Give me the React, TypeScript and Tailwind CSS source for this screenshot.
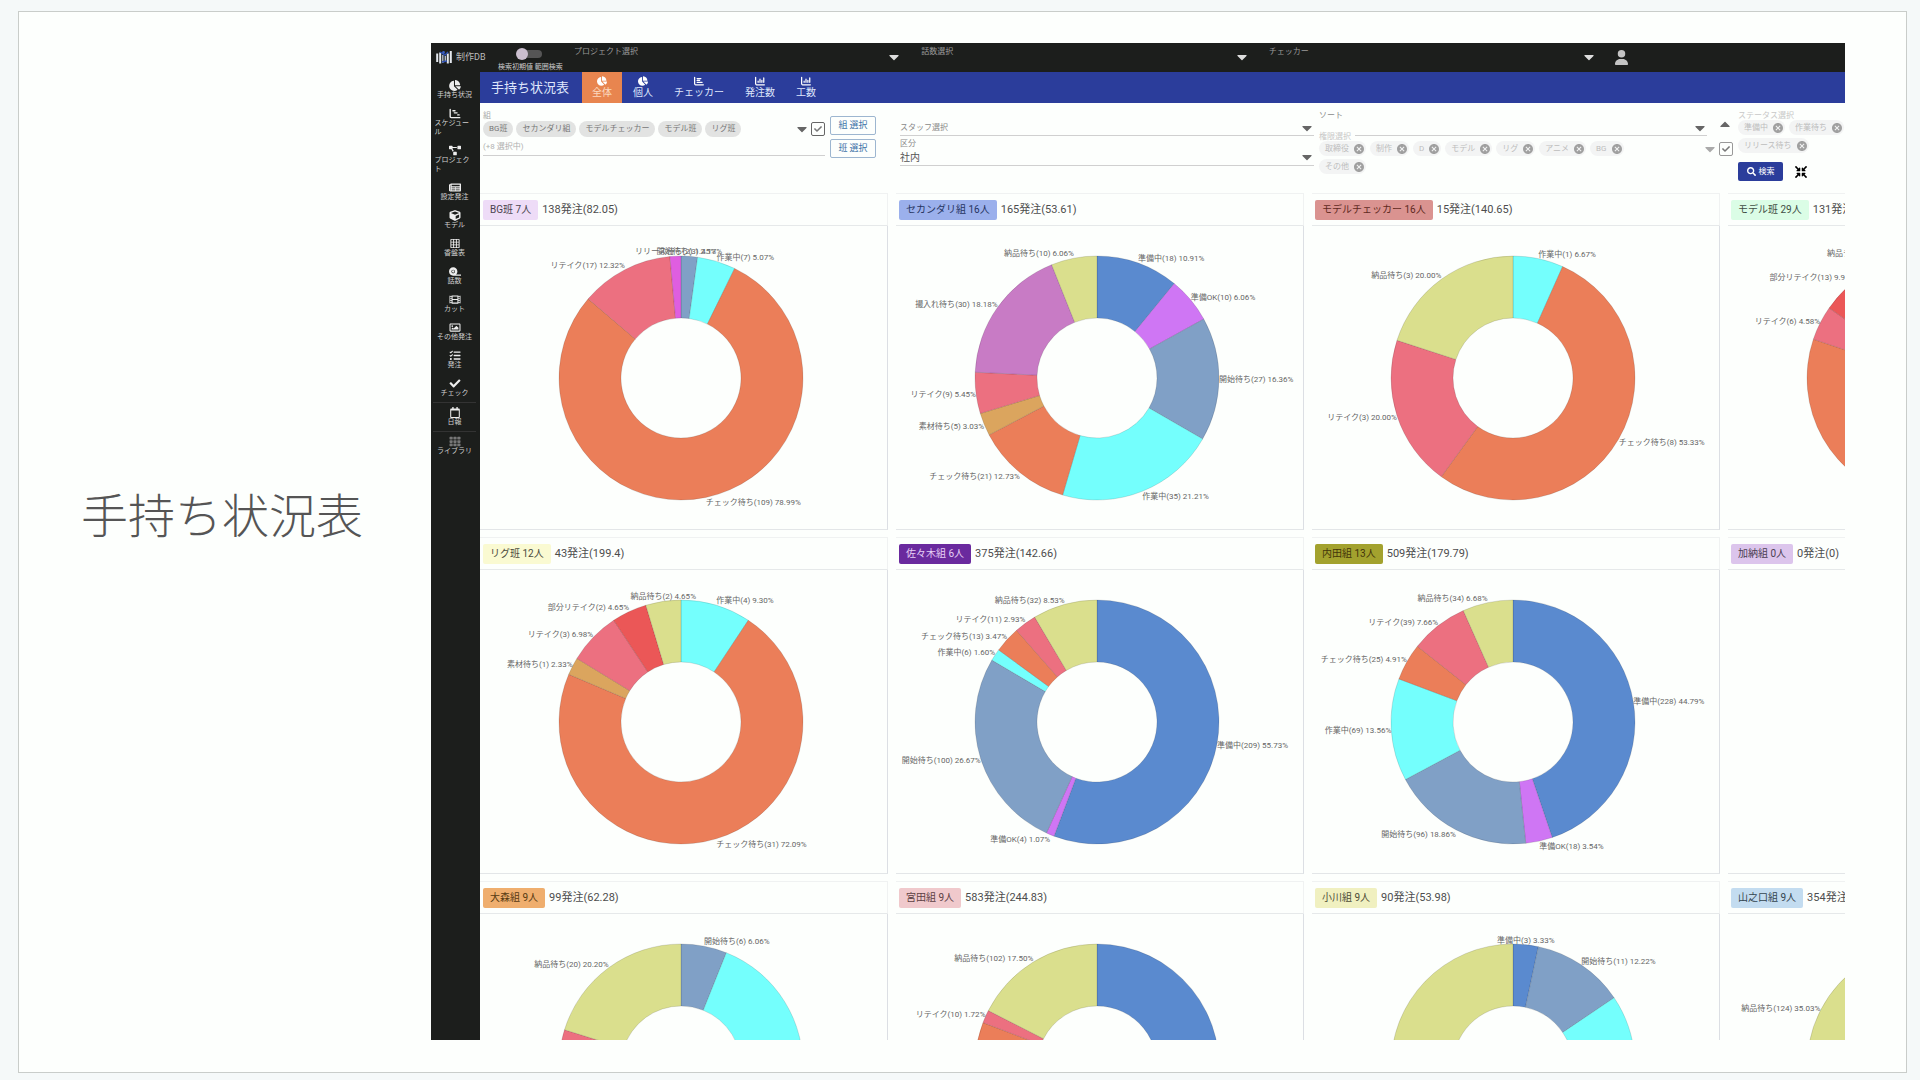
import React from "react";
import {
  FaCaretDown,
  FaCaretUp,
  FaChartPie,
  FaCheck,
  FaCompressArrowsAlt,
  FaCube,
  FaFilm,
  FaNewspaper,
  FaProjectDiagram,
  FaRegCalendar,
  FaRegImage,
  FaSearch,
  FaTape,
  FaTasks,
  FaTh,
} from "react-icons/fa";
import { FaChartBar, FaChartColumn, FaChartGantt, FaUser } from "react-icons/fa6";
import { MdCancel, MdGridOn } from "react-icons/md";

type Slice = [status: string, count: number];

type Team = {
  name: string;
  badge: string;
  orders: string;
  slices: Slice[];
};

const STATUS_COLORS: Record<string, string> = {
  準備中: "#5a8acf",
  準備OK: "#cf76f4",
  開始待ち: "#80a0c6",
  作業中: "#74fffd",
  チェック待ち: "#eb7e59",
  素材待ち: "#dba55e",
  リテイク: "#ec7080",
  部分リテイク: "#eb5757",
  撮入れ待ち: "#c87bc5",
  リリース待ち: "#df5ee0",
  納品チェック: "#dadf8d",
  納品待ち: "#dadf8d",
};

const TEAMS: Team[] = [
  {
    name: "BG班 7人",
    badge: "bg-[#eedcf7] text-[#4a444e]",
    orders: "138発注(82.05)",
    slices: [["開始待ち", 3], ["作業中", 7], ["チェック待ち", 109], ["リテイク", 17], ["リリース待ち", 2]],
  },
  {
    name: "セカンダリ組 16人",
    badge: "bg-[#9bb0ec] text-[#26345f]",
    orders: "165発注(53.61)",
    slices: [
      ["準備中", 18],
      ["準備OK", 10],
      ["開始待ち", 27],
      ["作業中", 35],
      ["チェック待ち", 21],
      ["素材待ち", 5],
      ["リテイク", 9],
      ["撮入れ待ち", 30],
      ["納品待ち", 10],
    ],
  },
  {
    name: "モデルチェッカー 16人",
    badge: "bg-[#da9390] text-[#5f2a22]",
    orders: "15発注(140.65)",
    slices: [["作業中", 1], ["チェック待ち", 8], ["リテイク", 3], ["納品待ち", 3]],
  },
  {
    name: "モデル班 29人",
    badge: "bg-[#dbfde6] text-[#414d44]",
    orders: "131発注(120.5)",
    slices: [["チェック待ち", 105], ["リテイク", 6], ["部分リテイク", 13], ["納品チェック", 7]],
  },
  {
    name: "リグ班 12人",
    badge: "bg-[#fafad2] text-[#4b4a3c]",
    orders: "43発注(199.4)",
    slices: [
      ["作業中", 4],
      ["チェック待ち", 31],
      ["素材待ち", 1],
      ["リテイク", 3],
      ["部分リテイク", 2],
      ["納品待ち", 2],
    ],
  },
  {
    name: "佐々木組 6人",
    badge: "bg-[#6a2a9e] text-[#e6cff5]",
    orders: "375発注(142.66)",
    slices: [
      ["準備中", 209],
      ["準備OK", 4],
      ["開始待ち", 100],
      ["作業中", 6],
      ["チェック待ち", 13],
      ["リテイク", 11],
      ["納品待ち", 32],
    ],
  },
  {
    name: "内田組 13人",
    badge: "bg-[#a3a22e] text-[#43350a]",
    orders: "509発注(179.79)",
    slices: [
      ["準備中", 228],
      ["準備OK", 18],
      ["開始待ち", 96],
      ["作業中", 69],
      ["チェック待ち", 25],
      ["リテイク", 39],
      ["納品待ち", 34],
    ],
  },
  { name: "加納組 0人", badge: "bg-[#dcc5ec] text-[#4a3d52]", orders: "0発注(0)", slices: [] },
  {
    name: "大森組 9人",
    badge: "bg-[#efae6e] text-[#573a12]",
    orders: "99発注(62.28)",
    slices: [["開始待ち", 6], ["作業中", 40], ["チェック待ち", 28], ["リテイク", 5], ["納品待ち", 20]],
  },
  {
    name: "宮田組 9人",
    badge: "bg-[#f0c9cc] text-[#5c4043]",
    orders: "583発注(244.83)",
    slices: [["準備中", 330], ["作業中", 81], ["チェック待ち", 60], ["リテイク", 10], ["納品待ち", 102]],
  },
  {
    name: "小川組 9人",
    badge: "bg-[#f0f0c0] text-[#4c4b36]",
    orders: "90発注(53.98)",
    slices: [["準備中", 3], ["開始待ち", 11], ["作業中", 30], ["納品待ち", 46]],
  },
  {
    name: "山之口組 9人",
    badge: "bg-[#c3dcf0] text-[#33444f]",
    orders: "354発注(98.2)",
    slices: [["作業中", 230], ["納品待ち", 124]],
  },
];

const MENU = [
  { label: "手持ち状況", icon: FaChartPie },
  { label: "スケジュール", icon: FaChartGantt },
  { label: "プロジェクト", icon: FaProjectDiagram },
  { label: "設定発注", icon: FaNewspaper },
  { label: "モデル", icon: FaCube },
  { label: "香盤表", icon: MdGridOn },
  { label: "話数", icon: FaTape },
  { label: "カット", icon: FaFilm },
  { label: "その他発注", icon: FaRegImage },
  { label: "発注", icon: FaTasks },
  { label: "チェック", icon: FaCheck },
  { label: "日報", icon: FaRegCalendar, divided: true },
  { label: "ライブラリ", icon: FaTh, divided: true, dim: true },
];

const TABS = [
  { label: "全体", icon: FaChartPie, active: true },
  { label: "個人", icon: FaChartPie },
  { label: "チェッカー", icon: FaChartBar },
  { label: "発注数", icon: FaChartColumn },
  { label: "工数", icon: FaChartColumn },
];

const STATUS_ROWS = [["準備中", "作業待ち"], ["リリース待ち"]];

const CX = 201;
const CY = 152;
const OUTER = 122;
const INNER = 60;

const point = (r: number, a: number) => `${CX + r * Math.sin(a)} ${CY - r * Math.cos(a)}`;

const Donut: React.FC<{ slices: Slice[] }> = ({ slices }) => {
  const total = slices.reduce((sum, [, n]) => sum + n, 0);
  let seen = 0;
  const arcs = slices.map(([status, n]) => {
    const from = (seen / total) * Math.PI * 2;
    seen += n;
    const to = (seen / total) * Math.PI * 2;
    return { status, n, from, to, mid: (from + to) / 2 };
  });

  return (
    <svg width="402" height="303" viewBox="0 0 402 303" className="block overflow-visible">
      {arcs.map(({ status, from, to }) => {
        const large = to - from > Math.PI ? 1 : 0;
        return (
          <path
            key={status}
            d={`M${point(OUTER, from)}A${OUTER} ${OUTER} 0 ${large} 1 ${point(OUTER, to)}L${point(INNER, to)}A${INNER} ${INNER} 0 ${large} 0 ${point(INNER, from)}Z`}
            fill={STATUS_COLORS[status]}
            stroke="#000"
            strokeOpacity="0.12"
          />
        );
      })}
      {arcs.map(({ status, n, mid }) => {
        const sin = Math.sin(mid);
        // labels that sit almost straight above or below the ring are centred
        const anchor = Math.abs(sin) < 0.16 ? "middle" : sin > 0 ? "start" : "end";
        return (
          <text
            key={status}
            x={CX + OUTER * sin}
            y={CY + 3 - 127 * Math.cos(mid)}
            textAnchor={anchor}
            className="fill-[#666] text-[8px]"
          >
            {status}({n}) {((n / total) * 100).toFixed(2)}%
          </text>
        );
      })}
    </svg>
  );
};

const TeamCard: React.FC<{ team: Team }> = ({ team }) => (
  <section>
    <header className="flex h-[33px] items-center gap-1 border-t border-r border-b border-[#f0f2f2] border-b-[#e6e9ea] pt-px pl-[3px]">
      <span className={`rounded-[2px] px-[7px] text-[10px] leading-5 whitespace-nowrap ${team.badge}`}>
        {team.name}
      </span>
      <h2 className="text-[11px] whitespace-nowrap text-[#4d4d4d]">{team.orders}</h2>
    </header>
    <div className="h-[304px] border-r border-b border-[#dcdfe4] border-b-[#e3e6e8]">
      {team.slices.length > 0 && <Donut slices={team.slices} />}
    </div>
  </section>
);

const Chip: React.FC<{ label: string; removable?: boolean }> = ({ label, removable }) =>
  removable ? (
    <span className="flex h-[15px] shrink-0 items-center gap-1 rounded-full bg-[#f3f4f4] pr-px pl-[6px] text-[8px] whitespace-nowrap text-[#bdbdbd]">
      {label}
      <button type="button" aria-label={`${label}を外す`}>
        <MdCancel className="size-3 text-[#a0a0a0]" />
      </button>
    </span>
  ) : (
    <span className="flex h-4 items-center rounded-full bg-[#e2e3e2] px-[6px] text-[8px] whitespace-nowrap text-[#777]">
      {label}
    </span>
  );

const TickBox: React.FC<{ label: string; light?: boolean }> = ({ label, light }) => (
  <span className="relative block size-[14px] shrink-0">
    <input
      type="checkbox"
      defaultChecked
      aria-label={label}
      className={`block size-[14px] appearance-none rounded-[2px] border ${light ? "border-[#999]" : "border-[#666]"}`}
    />
    <FaCheck className="pointer-events-none absolute top-[3px] left-[3px] size-2 text-[#777]" />
  </span>
);

const Caret: React.FC = () => <FaCaretDown className="h-4 w-[14px] shrink-0 text-[#666]" />;

const HeaderSelect: React.FC<{ id: string; label: string }> = ({ id, label }) => (
  <div className="flex-1 pt-[5px]">
    <label htmlFor={id} className="block text-[8px] leading-2 text-[#9a9a9a]">
      {label}
    </label>
    <div className="-mt-[7px] flex items-center">
      <select id={id} className="h-3 flex-1 appearance-none text-[8px] text-white">
        <option></option>
      </select>
      <FaCaretDown className="h-4 w-[14px] shrink-0 text-[#ddd]" />
    </div>
  </div>
);

const TopBar: React.FC = () => (
  <header className="flex h-[29px] items-stretch bg-[#1c1e1c] pr-[215px] pl-[5px]">
    <div className="flex w-[62px] items-center gap-1 text-[9px] text-[#bbb]">
      <svg width="16" height="15" viewBox="0 0 16 15" className="shrink-0">
        <path d="M1.2 3.5v8.5M4.2 2.5v11M11.8 3.5v10M14.8 1v12" stroke="#e4e8ee" strokeWidth="2" />
        <path d="M6.8 5v8M9.3 6v6" stroke="#aeb9cc" strokeWidth="1.4" />
        <path d="M4 2l5 3 3-3M6 12l5-1" stroke="#2d4fb0" strokeWidth="1.4" fill="none" />
        <circle cx="7.5" cy="2.5" r="1.4" fill="#3a5fc4" />
      </svg>
      制作DB
    </div>
    <div className="flex w-[76px] flex-col gap-[5px] pt-[7px]">
      <input
        id="range"
        type="checkbox"
        role="switch"
        className="relative ml-[22px] h-2 w-[22px] appearance-none rounded-full bg-[#555] before:absolute before:-top-[2px] before:-left-1 before:size-3 before:rounded-full before:bg-[#cbbfcf]"
      />
      <label htmlFor="range" className="text-[7px] leading-2 whitespace-nowrap text-[#ccc]">
        検索初期値 範囲検索
      </label>
    </div>
    <div className="flex flex-1 gap-5">
      <HeaderSelect id="project" label="プロジェクト選択" />
      <HeaderSelect id="episode" label="話数選択" />
      <HeaderSelect id="checker" label="チェッカー" />
    </div>
    <button type="button" aria-label="ユーザー" className="pr-px pl-[18px]">
      <FaUser className="size-[15px] text-[#c4c4c4]" />
    </button>
  </header>
);

const SideMenu: React.FC = () => (
  <nav className="w-[49px] shrink-0 bg-[#1c1e1c] pt-1 pr-1 pl-[2px]">
    {MENU.map(({ label, icon: Icon, divided, dim }) => (
      <a
        key={label}
        href="#"
        className={`flex flex-col items-center py-1 text-[7px] leading-[9px] text-[#d0d0d0] ${divided ? "border-t border-[#333]" : ""}`}
      >
        <Icon className={`h-[11px] w-3 ${dim ? "text-[#777]" : "text-[#eee]"}`} />
        <span className="max-w-[40px] break-all">{label}</span>
      </a>
    ))}
  </nav>
);

const TabBar: React.FC = () => (
  <div className="flex h-[31px] items-stretch bg-[#2b3d9b] text-[#dfe6fb]">
    <h1 className="w-[102px] pl-[11px] text-[13px] leading-[31px] whitespace-nowrap">手持ち状況表</h1>
    <nav className="flex gap-px">
      {TABS.map(({ label, icon: Icon, active }) => (
        <a
          key={label}
          href="#"
          className={`flex flex-col items-center gap-[2px] px-[10px] pt-1 text-[10px] leading-[10px] whitespace-nowrap ${active ? "bg-[#e8854f] text-[#fbd9bf]" : ""}`}
        >
          <Icon className="size-[10px] shrink-0 text-white" />
          {label}
        </a>
      ))}
    </nav>
  </div>
);

const Filters: React.FC = () => (
  <form className="grid h-[90px] grid-cols-[342fr_65px_414fr_414fr_107px] gap-x-[5px] pl-[3px] text-[8px] text-[#8a8a8a]">
    <div className="pt-2">
      <p className="h-[10px] leading-[10px] text-[#aaa]">組</p>
      <div className="flex items-center gap-[3px]">
        {["BG班", "セカンダリ組", "モデルチェッカー", "モデル班", "リグ班"].map((t) => (
          <Chip key={t} label={t} />
        ))}
        <div className="ml-auto flex items-center gap-[2px]">
          <Caret />
          <TickBox label="組をすべて選択" />
        </div>
      </div>
      <p className="border-b border-[#d0d0d0] pt-1 pb-[2px] leading-3 text-[#b0b0b0]">(+8 選択中)</p>
    </div>

    <div className="flex flex-col items-start gap-1 pt-[13px]">
      <button type="button" className="h-[19px] w-[46px] rounded-[2px] border border-[#9db6d0] text-[9px] text-[#3f74a8]">
        組 選択
      </button>
      <button type="button" className="h-[19px] w-[46px] rounded-[2px] border border-[#9db6d0] text-[9px] text-[#3f74a8]">
        班 選択
      </button>
    </div>

    <div className="pt-[17px]">
      <div className="flex h-4 items-center border-b border-[#d0d0d0]">
        <select aria-label="スタッフ選択" className="h-4 flex-1 appearance-none">
          <option>スタッフ選択</option>
        </select>
        <Caret />
      </div>
      <label htmlFor="kind" className="block pt-[3px] leading-[10px]">
        区分
      </label>
      <div className="flex h-[17px] items-center border-b border-[#d0d0d0]">
        <select id="kind" className="h-4 flex-1 appearance-none text-[10px] text-[#555]">
          <option>社内</option>
        </select>
        <Caret />
      </div>
    </div>

    <div className="pt-[9px]">
      <label htmlFor="sort" className="block h-2 leading-2">
        ソート
      </label>
      <div className="flex items-center">
        <div className="flex h-4 flex-1 items-center border-b border-[#d0d0d0]">
          <select id="sort" className="h-4 flex-1 appearance-none">
            <option></option>
          </select>
          <Caret />
        </div>
        <button type="button" aria-label="昇順" className="-mt-2 pr-px pl-[11px]">
          <FaCaretUp className="h-4 w-[14px] text-[#666]" />
        </button>
      </div>
      <p className="relative -mt-1 w-fit bg-[#fdfffd] pr-1 leading-[9px] text-[#c8c8c8]">権限選択</p>
      <div className="flex items-start">
        <div className="flex flex-1 flex-wrap gap-x-1 gap-y-[3px] pr-10">
          {["取締役", "制作", "D", "モデル", "リグ", "アニメ", "BG", "その他"].map((t) => (
            <Chip key={t} label={t} removable />
          ))}
        </div>
        <div className="flex items-center gap-[2px]">
          <FaCaretDown className="h-4 w-[14px] shrink-0 text-[#aaa]" />
          <TickBox label="権限をすべて選択" light />
        </div>
      </div>
    </div>

    <div className="pt-2">
      <p className="h-[9px] leading-[9px] text-[#c8c8c8]">ステータス選択</p>
      <div className="flex flex-col gap-[3px]">
        {STATUS_ROWS.map((row) => (
          <div key={row[0]} className="flex gap-1">
            {row.map((t) => (
              <Chip key={t} label={t} removable />
            ))}
          </div>
        ))}
      </div>
      <div className="flex items-center gap-3 pt-[9px]">
        <button
          type="submit"
          className="flex h-[19px] w-[45px] items-center justify-center gap-[3px] rounded-[2px] bg-[#2b3d9b] text-[8px] text-white"
        >
          <FaSearch className="size-[9px]" />
          検索
        </button>
        <button type="button" aria-label="縮小">
          <FaCompressArrowsAlt className="size-3 text-black" />
        </button>
      </div>
    </div>
  </form>
);

const App: React.FC = () => {
  return (
    <div className="flex h-screen bg-[#f5f9f9] pt-[11px] pr-[13px] pb-[7px] pl-[18px] font-['Roboto','Noto_Sans_CJK_JP',sans-serif]">
      <main lang="ja" className="flex flex-1 overflow-hidden border border-[#c9cdca] bg-[#fdfffd] pt-[31px] pr-[61px] pb-[32px]">
        <div className="flex w-[412px] shrink-0 items-center pb-12 pl-[62px]">
          <p className="text-[47px] font-light whitespace-nowrap text-[#555]">手持ち状況表</p>
        </div>
        <div className="flex min-w-0 flex-1 flex-col overflow-hidden">
          <TopBar />
          <div className="flex min-h-0 flex-1">
            <SideMenu />
            <div className="min-w-0 flex-1 overflow-hidden">
              <TabBar />
              <Filters />
              <div className="grid w-max grid-cols-[repeat(4,408px)] gap-x-2 gap-y-[7px]">
                {TEAMS.map((team) => (
                  <TeamCard key={team.name} team={team} />
                ))}
              </div>
            </div>
          </div>
        </div>
      </main>
    </div>
  );
};

export default App;
